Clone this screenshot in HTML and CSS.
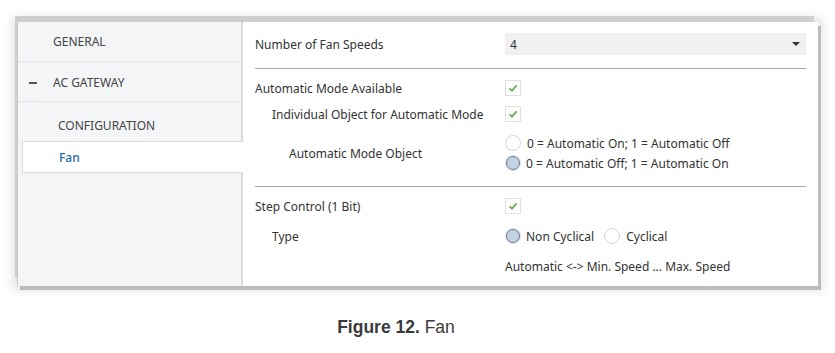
FILE: index.html
```html
<!DOCTYPE html>
<html>
<head>
<meta charset="utf-8">
<link rel="stylesheet" href="styles.css">
</head>
<body>
<div class="window">
  <nav class="sidebar">
    <div class="nav-item">GENERAL</div>
    <div class="nav-item group"><span class="minus"></span>AC GATEWAY<span class="notch"></span></div>
    <div class="nav-item sub config">CONFIGURATION</div>
    <div class="nav-item sub active">Fan</div>
    <div class="nav-fill"></div>
  </nav>
  <main class="content">
    <section class="section first">
      <div class="row short">
        <div class="label">Number of Fan Speeds</div>
        <div class="value">
          <div class="select"><span>4</span><span class="caret"></span></div>
        </div>
      </div>
    </section>
    <section class="section second">
      <div class="row">
        <div class="label">Automatic Mode Available</div>
        <div class="value"><span class="check"><svg viewBox="0 0 14 14" width="14" height="14"><path d="M3.5 7.3 L6 9.6 L10.6 4.4" fill="none" stroke="#6fae55" stroke-width="1.8"/></svg></span></div>
      </div>
      <div class="row">
        <div class="label indent1">Individual Object for Automatic Mode</div>
        <div class="value"><span class="check"><svg viewBox="0 0 14 14" width="14" height="14"><path d="M3.5 7.3 L6 9.6 L10.6 4.4" fill="none" stroke="#6fae55" stroke-width="1.8"/></svg></span></div>
      </div>
      <div class="row tall">
        <div class="label indent2">Automatic Mode Object</div>
        <div class="value radios-col">
          <label class="opt"><span class="radio"></span>0 = Automatic On; 1 = Automatic Off</label>
          <label class="opt"><span class="radio on"></span>0 = Automatic Off; 1 = Automatic On</label>
        </div>
      </div>
    </section>
    <section class="section third">
      <div class="row r30">
        <div class="label">Step Control (1 Bit)</div>
        <div class="value"><span class="check"><svg viewBox="0 0 14 14" width="14" height="14"><path d="M3.5 7.3 L6 9.6 L10.6 4.4" fill="none" stroke="#6fae55" stroke-width="1.8"/></svg></span></div>
      </div>
      <div class="row r30">
        <div class="label indent1">Type</div>
        <div class="value radios-row">
          <label class="opt"><span class="radio on"></span>Non Cyclical</label>
          <label class="opt"><span class="radio"></span>Cyclical</label>
        </div>
      </div>
      <div class="row r30">
        <div class="label"></div>
        <div class="value">Automatic &lt;-&gt; Min. Speed ... Max. Speed</div>
      </div>
    </section>
  </main>
</div>
<p class="caption"><b>Figure 12.</b> Fan</p>
</body>
</html>
```
FILE: styles.css
```css
html, body {
  margin: 0;
  padding: 0;
  background: #ffffff;
}
body {
  font-family: "Noto Sans", "Open Sans", sans-serif;
  font-size: 12px;
  color: #333;
}
.window {
  margin: 22px 0 0 17px;
  width: 801px;
  height: 264px;
  display: flex;
  background: #fff;
  box-shadow: -3px -7px 0 -1px #cfcfcf, 3px 4px 0 0 #bcbcbc, 0 0 9px 5px rgba(0,0,0,0.10);
  border-left: 1px solid #c8c8c8;
  box-sizing: border-box;
}
.sidebar {
  width: 225px;
  display: flex;
  flex-direction: column;
  background: #f3f5f6;
  flex-shrink: 0;
}
.nav-item {
  position: relative;
  height: 40px;
  display: flex;
  align-items: center;
  padding-left: 35px;
  color: #444;
  font-size: 12px;
  border-bottom: 1px solid #e2e5e7;
  border-right: 2px solid #d9dbdc;
  box-sizing: border-box;
}
.nav-item.group { padding-top: 2px; }
.minus {
  position: absolute;
  left: 11px;
  top: 20px;
  width: 8px;
  height: 1.5px;
  background: #555;
}
.notch {
  position: absolute;
  left: 10px;
  bottom: -7px;
  width: 0;
  height: 0;
  border-left: 5px solid transparent;
  border-right: 5px solid transparent;
  border-top: 6px solid #f7f8f9;
}
.nav-item.sub { padding-left: 40px; height: 40px; border-bottom: none; }
.nav-item.config { height: 39px; padding-top: 8px; }
.nav-item.active {
  height: 32px;
  margin-left: 4px;
  padding-left: 36px;
  background: #fff;
  color: #2a6ca8;
  border: 1px solid #dadcdd;
  border-right: none;
  font-weight: 500;
}
.nav-fill {
  flex: 1;
  border-right: 2px solid #d9dbdc;
}
.content {
  flex: 1;
  padding: 0 12px;
}
.section { border-bottom: 1px solid #a9a9a9; }
.section.third { border-bottom: none; }
.section.first { padding: 11px 0 13px; }
.section.second { padding: 6px 0 13px; }
.section.third { padding: 4px 0 0; }
.row {
  display: flex;
  align-items: center;
  min-height: 26px;
}
.row.short { min-height: 22px; }
.row.r30 { height: 30px; }
.row.tall { margin-top: 6px; }
.label {
  width: 250px;
  flex-shrink: 0;
  box-sizing: border-box;
}
.indent1 { padding-left: 17px; }
.indent2 { padding-left: 34px; }
.value { flex: 1; display: flex; align-items: center; }
.select {
  flex: 1;
  height: 22px;
  background: #f0f0f0;
  display: flex;
  align-items: center;
  justify-content: space-between;
  padding: 0 5px;
}
.caret {
  width: 0; height: 0;
  border-left: 4px solid transparent;
  border-right: 4px solid transparent;
  border-top: 4px solid #333;
  margin-right: 1px;
}
.check {
  width: 14px;
  height: 14px;
  border: 1px solid #e0e0e0;
  background: #fff;
  display: inline-flex;
}
.radios-col { flex-direction: column; align-items: flex-start; }
.radios-col .opt { height: 20px; }
.opt { display: flex; align-items: center; white-space: nowrap; }
.radios-row .opt { margin-right: 10px; }
.radio {
  width: 14px;
  height: 14px;
  border-radius: 50%;
  border: 1px solid #d4d4d4;
  background: #fff;
  margin-right: 6px;
  box-sizing: content-box;
}
.radio.on {
  border: 1.5px solid #6f7f90;
  width: 12px;
  height: 12px;
  margin-left: 1px;
  background: #c3d3e4;
  box-shadow: 0 0 0 1px #dfe4ea;
}
.caption {
  margin: 31px 0 0;
  padding-right: 43px;
  text-align: center;
  font-family: "Liberation Sans", Arial, sans-serif;
  font-size: 17.5px;
  color: #3a3a3a;
}
.caption b { font-weight: bold; }
```
